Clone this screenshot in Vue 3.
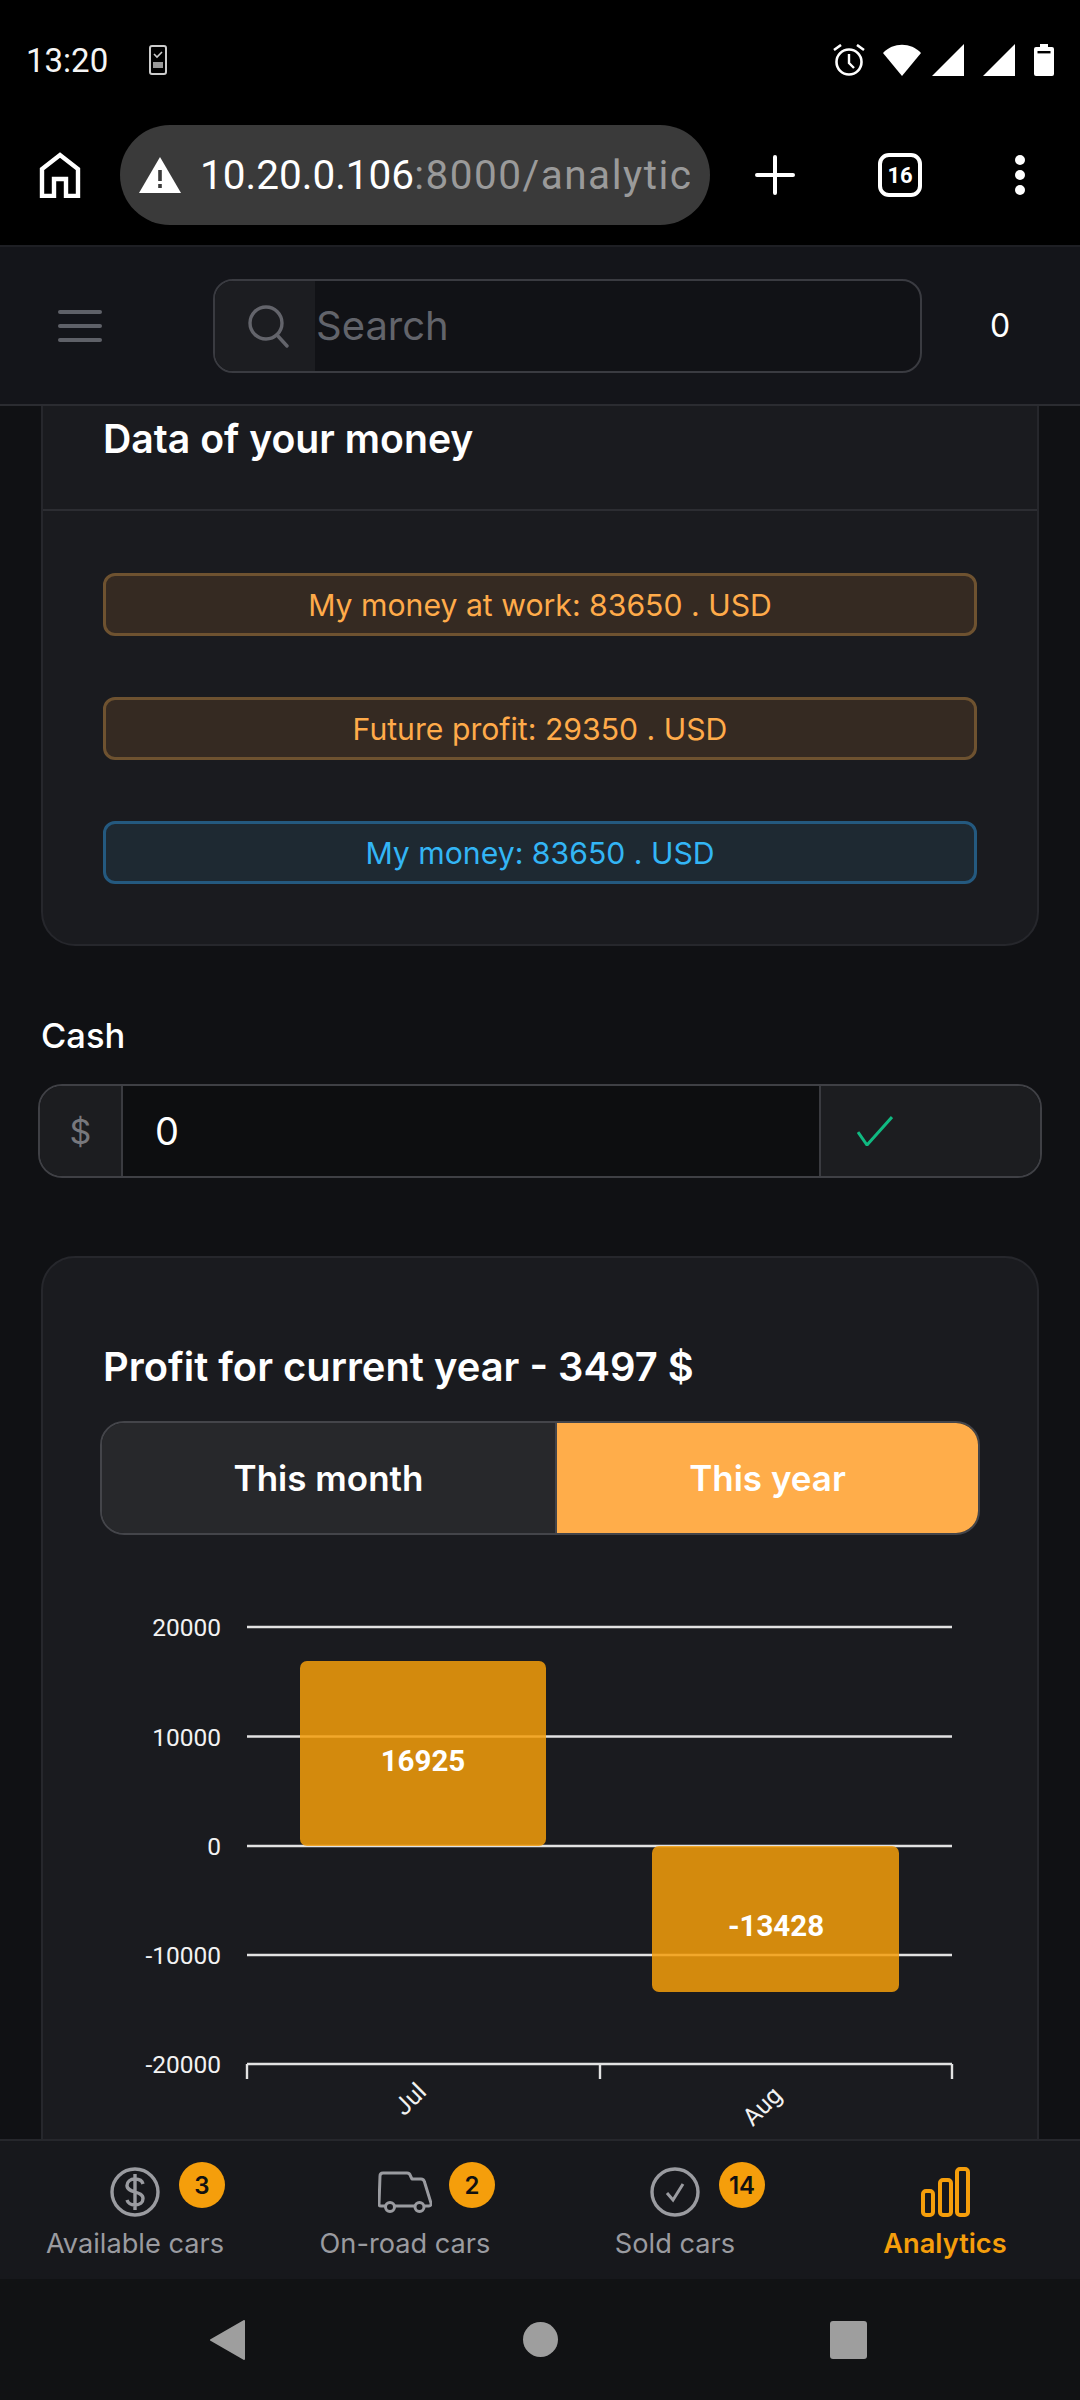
<template>
  <div class="screen">
    <div class="status-bar">
      <div class="status-left">
        <span class="time">13:20</span>
        <svg class="phone-icon" viewBox="0 0 18 30" width="18" height="30">
          <rect x="1" y="1" width="16" height="28" rx="2" fill="none" stroke="#ccc" stroke-width="2" />
          <path d="M5 9l3 3 5-5" fill="none" stroke="#ccc" stroke-width="1.6" />
          <rect x="4" y="17" width="10" height="6" fill="#999" />
        </svg>
      </div>
      <div class="status-right">
        <svg viewBox="0 0 32 32" width="32" height="32">
          <circle cx="16" cy="18" r="12.5" fill="none" stroke="#fff" stroke-width="2.6" />
          <path d="M16 10v9l5 5" fill="none" stroke="#fff" stroke-width="2.4" />
          <path d="M1 6l7-5M31 6l-7-5" stroke="#fff" stroke-width="2.6" />
        </svg>
        <svg class="wifi" viewBox="0 0 38 32" width="38" height="32">
          <path d="M0 9C10-2 28-2 38 9L19 32z" fill="#fff" />
        </svg>
        <svg class="signal" viewBox="0 0 32 32" width="32" height="32">
          <path d="M32 0v32H0z" fill="#fff" />
        </svg>
        <svg class="signal" viewBox="0 0 32 32" width="32" height="32">
          <path d="M32 0v32H0z" fill="#fff" />
        </svg>
        <svg class="battery" viewBox="0 0 20 32" width="20" height="32">
          <path d="M6 0h8v3h4a2 2 0 0 1 2 2v25a2 2 0 0 1-2 2H2a2 2 0 0 1-2-2V5a2 2 0 0 1 2-2h4z" fill="#fff" />
          <rect x="3.5" y="7" width="13" height="2.4" fill="#000" />
        </svg>
      </div>
    </div>

    <div class="toolbar">
      <svg class="home-icon" viewBox="0 0 42 46" width="42" height="46">
        <path d="M3 44V17L21 3l18 14v27H27V27H15v17z" fill="none" stroke="#fff" stroke-width="4.4" />
      </svg>
      <div class="url-pill">
        <svg viewBox="0 0 42 36" width="42" height="36">
          <path d="M21 0l21 36H0z" fill="#fff" />
          <rect x="19.2" y="13" width="3.6" height="11" fill="#3a3a3a" />
          <rect x="19.2" y="27" width="3.6" height="4" fill="#3a3a3a" />
        </svg>
        <div class="url-text"><span class="url-host">10.20.0.106</span><span class="url-path">:8000/analytics</span></div>
      </div>
      <svg class="plus-icon" viewBox="0 0 40 40" width="40" height="40">
        <path d="M20 2v36M2 20h36" stroke="#fff" stroke-width="4" stroke-linecap="round" />
      </svg>
      <div class="tab-count">16</div>
      <div class="dots"><i></i><i></i><i></i></div>
    </div>

    <header class="app-header">
      <div class="burger"><i></i><i></i><i></i></div>
      <div class="search-box">
        <span class="search-prefix">
          <svg viewBox="0 0 42 44" width="42" height="44">
            <circle cx="19" cy="19" r="16" fill="none" stroke="#63646b" stroke-width="3.4" />
            <path d="M30 31l10 11" stroke="#63646b" stroke-width="3.4" stroke-linecap="round" />
          </svg>
        </span>
        <input class="search-input" placeholder="Search" />
      </div>
      <span class="header-count">0</span>
    </header>

    <main class="content">
      <section class="card money-card">
        <div class="card-header">
          <h2>Data of your money</h2>
        </div>
        <div class="card-body">
          <div
            v-for="alert in alerts"
            :key="alert.text"
            class="alert"
            :class="alert.kind"
          >
            {{ alert.text }}
          </div>
        </div>
      </section>

      <label class="cash-label">Cash</label>
      <div class="cash-group">
        <span class="cash-prefix">$</span>
        <input class="cash-input" value="0" />
        <button class="cash-save">
          <svg viewBox="0 0 36 30" width="36" height="30">
            <path d="M1 16l9 13L35 1" fill="none" stroke="#10b981" stroke-width="3" />
          </svg>
        </button>
      </div>

      <section class="card profit-card">
        <h2>Profit for current year - 3497 $</h2>
        <div class="toggle">
          <button class="toggle-btn">This month</button>
          <button class="toggle-btn active">This year</button>
        </div>

        <svg class="chart" viewBox="43 1590 994 560" width="994" height="560">
          <line
            v-for="tick in ticks"
            :key="tick.label"
            x1="247"
            x2="952"
            :y1="tick.y"
            :y2="tick.y"
            class="grid-line"
          />
          <text
            v-for="tick in ticks"
            :key="'l' + tick.label"
            x="221"
            :y="tick.y + 9"
            text-anchor="end"
            class="axis-label"
          >
            {{ tick.label }}
          </text>
          <path d="M247 2079v-15M600 2079v-15M952 2079v-15" class="grid-line" />

          <rect x="300" y="1661" width="246" height="185" rx="7" class="bar" />
          <rect x="652" y="1846" width="247" height="146" rx="7" class="bar" />
          <text x="423" y="1771" text-anchor="middle" class="bar-label">16925</text>
          <text x="776" y="1936" text-anchor="middle" class="bar-label">-13428</text>

          <text x="0" y="0" text-anchor="middle" class="axis-label" transform="translate(416 2105) rotate(-45)">Jul</text>
          <text x="0" y="0" text-anchor="middle" class="axis-label" transform="translate(768 2112) rotate(-45)">Aug</text>
        </svg>
      </section>
    </main>

    <nav class="bottom-nav">
      <div
        v-for="item in navItems"
        :key="item.label"
        class="nav-item"
        :class="{ active: item.active }"
      >
        <div class="nav-icon">
          <svg v-if="item.icon === 'dollar'" viewBox="0 0 50 50" width="50" height="50">
            <circle cx="25" cy="25" r="23" fill="none" stroke="#9a9ba0" stroke-width="3.4" />
            <path d="M33 17c-1-4-4-5-8-5-5 0-8 3-8 6.5 0 8 16 5 16 13 0 4-3 6.5-8 6.5-4 0-7-2-8-5M25 7v36" fill="none" stroke="#9a9ba0" stroke-width="3.4" />
          </svg>
          <svg v-if="item.icon === 'truck'" viewBox="0 0 54 42" width="54" height="42">
            <path d="M7 35H3c-1.5 0-2-1-2-2L2 5c0-2 1-3 3-3h24c2 0 3 1 3.500 3L34 8h9c2 0 3 1 3.500 3L53 32c.3 2-.5 3-2 3h-4M17 35h20" fill="none" stroke="#9a9ba0" stroke-width="3" stroke-linejoin="round" />
            <circle cx="12" cy="36" r="4.5" fill="none" stroke="#9a9ba0" stroke-width="3" />
            <circle cx="41.5" cy="36" r="4.5" fill="none" stroke="#9a9ba0" stroke-width="3" />
          </svg>
          <svg v-if="item.icon === 'check'" viewBox="0 0 50 50" width="50" height="50">
            <circle cx="25" cy="25" r="23" fill="none" stroke="#9a9ba0" stroke-width="3.4" />
            <path d="M17 26l6 7 10-16" fill="none" stroke="#9a9ba0" stroke-width="3" />
          </svg>
          <svg v-if="item.icon === 'bars'" viewBox="0 0 50 50" width="50" height="50">
            <rect x="3" y="24" width="10" height="24" rx="3" fill="none" stroke="#f59e0b" stroke-width="4" />
            <rect x="20" y="13" width="11" height="35" rx="3" fill="none" stroke="#f59e0b" stroke-width="4" />
            <rect x="37" y="2" width="11" height="46" rx="3" fill="none" stroke="#f59e0b" stroke-width="4" />
          </svg>
          <span v-if="item.badge" class="badge">{{ item.badge }}</span>
        </div>
        <span class="nav-label">{{ item.label }}</span>
      </div>
    </nav>

    <div class="system-nav">
      <svg viewBox="0 0 36 40" width="36" height="40">
        <path d="M35 1v38L2 20z" fill="#9e9e9e" stroke="#9e9e9e" stroke-linejoin="round" stroke-width="2" />
      </svg>
      <span class="sys-circle"></span>
      <span class="sys-square"></span>
    </div>
  </div>
</template>

<script setup>
const alerts = [
  { text: "My money at work: 83650 . USD", kind: "warning" },
  { text: "Future profit: 29350 . USD", kind: "warning" },
  { text: "My money: 83650 . USD", kind: "info" },
];

const ticks = [
  { label: "20000", y: 1627 },
  { label: "10000", y: 1736.5 },
  { label: "0", y: 1846 },
  { label: "-10000", y: 1955 },
  { label: "-20000", y: 2064 },
];

const navItems = [
  { label: "Available cars", icon: "dollar", badge: 3 },
  { label: "On-road cars", icon: "truck", badge: 2 },
  { label: "Sold cars", icon: "check", badge: 14 },
  { label: "Analytics", icon: "bars", active: true },
];
</script>

<style>
html,
body {
  background: #101114;
}
</style>

<style scoped>
.screen {
  width: 1080px;
  height: 2400px;
  display: flex;
  flex-direction: column;
  overflow: hidden;
  background: #101114;
  color: #fff;
  font-family: Inter, "Liberation Sans", sans-serif;
}

/* android + browser chrome */
.status-bar {
  height: 120px;
  flex: none;
  background: #000;
  display: flex;
  align-items: center;
  justify-content: space-between;
  padding: 0 26px;
  box-sizing: border-box;
}

.status-left {
  display: flex;
  align-items: center;
  gap: 41px;
}

.time {
  font-family: Roboto, sans-serif;
  font-size: 33px;
  color: #f5f5f5;
}

.status-right {
  display: flex;
  align-items: center;
  gap: 18px;
}

.status-right svg {
  display: block;
}

.wifi {
  margin-right: -7px;
}

.signal + .signal {
  margin-left: 1px;
}

.battery {
  margin-left: 1px;
}

.toolbar {
  height: 125px;
  flex: none;
  background: #000;
  display: flex;
  align-items: center;
  padding: 5px 0 20px 39px;
  box-sizing: border-box;
}

.url-pill {
  width: 590px;
  height: 100px;
  margin-left: 39px;
  border-radius: 50px;
  background: #3a3a3a;
  display: flex;
  align-items: center;
  padding-left: 19px;
  box-sizing: border-box;
  flex: none;
}

.url-text {
  width: 490px;
  margin-left: 19px;
  overflow: hidden;
  white-space: nowrap;
  font-family: Roboto, sans-serif;
  font-size: 40.5px;
}

.url-host {
  color: #fff;
}

.url-path {
  color: #9a9a9a;
  letter-spacing: 1.5px;
}

.plus-icon {
  margin-left: 45px;
  flex: none;
}

.tab-count {
  width: 44px;
  height: 44px;
  margin-left: 83px;
  border: 4px solid #fff;
  border-radius: 11px;
  box-sizing: border-box;
  flex: none;
  display: flex;
  align-items: center;
  justify-content: center;
  font-family: Roboto, sans-serif;
  font-size: 22px;
  font-weight: 700;
}

.dots {
  margin-left: 93px;
  display: flex;
  flex-direction: column;
  gap: 5px;
}

.dots i {
  width: 10px;
  height: 10px;
  border-radius: 50%;
  background: #fff;
}

/* app header */
.app-header {
  height: 161px;
  flex: none;
  background: #14151a;
  border-top: 2px solid #1e1f24;
  border-bottom: 2px solid #2b2c31;
  display: flex;
  align-items: center;
  padding-left: 58px;
  box-sizing: border-box;
}

.burger {
  width: 44px;
  display: flex;
  flex-direction: column;
  gap: 10px;
}

.burger i {
  height: 4px;
  border-radius: 2px;
  background: #5f6168;
}

.search-box {
  width: 709px;
  height: 94px;
  margin-left: 111px;
  display: flex;
  border: 2px solid #3a3b41;
  border-radius: 20px;
  overflow: hidden;
  box-sizing: border-box;
  background: #111216;
}

.search-prefix {
  width: 100px;
  flex: none;
  background: #1c1d21;
  display: flex;
  align-items: center;
  justify-content: center;
  padding-left: 5px;
  box-sizing: border-box;
}

.search-input {
  flex: 1;
  min-width: 0;
  border: none;
  outline: none;
  background: transparent;
  padding: 0 0 0 1px;
  font-family: inherit;
  font-size: 40px;
  color: #fff;
}

.search-input::placeholder {
  color: #62646b;
  opacity: 1;
}

.header-count {
  margin-left: 68px;
  font-size: 32px;
}

/* page */
.content {
  height: 1733px;
  flex: none;
  overflow: hidden;
  padding: 0 41px;
}

.card {
  background: #1a1b1f;
  border: 2px solid #26272c;
  border-radius: 34px;
  box-sizing: border-box;
}

.card h2 {
  margin: 0;
  font-size: 39.2px;
  font-weight: 600;
  line-height: 46px;
}

.profit-card h2 {
  font-size: 39.9px;
}

.money-card {
  margin-top: -64px;
}

.card-header {
  padding: 72px 60px 47px;
  border-bottom: 2px solid #2c2d32;
}

.card-body {
  padding: 62px 60px 60px;
  display: flex;
  flex-direction: column;
  gap: 61px;
}

.alert {
  height: 63px;
  border-radius: 12px;
  border: 3px solid;
  box-sizing: border-box;
  display: flex;
  align-items: center;
  justify-content: center;
  font-size: 30.2px;
}

.alert.warning {
  background: #352a22;
  border-color: #6e5230;
  color: #ffab4a;
}

.alert.info {
  background: #1e2932;
  border-color: #24597f;
  color: #33b5f5;
}

.cash-label {
  display: block;
  margin-top: 70px;
  font-size: 34.5px;
  font-weight: 500;
  line-height: 40px;
}

.cash-group {
  height: 94px;
  margin: 28px -3px 0;
  display: flex;
  border: 2px solid #3f4045;
  border-radius: 24px;
  overflow: hidden;
  box-sizing: border-box;
}

.cash-prefix {
  width: 83px;
  flex: none;
  background: #1c1d20;
  border-right: 2px solid #3a3b40;
  box-sizing: border-box;
  display: flex;
  align-items: center;
  justify-content: center;
  font-size: 34px;
  color: #77787d;
}

.cash-input {
  flex: 1;
  min-width: 0;
  border: none;
  outline: none;
  background: #0d0e10;
  padding: 0 0 0 32px;
  font-family: inherit;
  font-size: 38px;
  color: #fff;
}

.cash-save {
  width: 221px;
  flex: none;
  background: #1c1d20;
  border: none;
  border-left: 2px solid #3a3b40;
  box-sizing: border-box;
  padding: 0 0 0 36px;
  text-align: left;
}

.cash-save svg {
  display: block;
}

.profit-card {
  margin-top: 78px;
  padding: 86px 60px 0;
  height: 1100px;
}

.toggle {
  height: 114px;
  margin: 31px -3px 0;
  display: flex;
  border: 2px solid #44454a;
  border-radius: 24px;
  overflow: hidden;
  box-sizing: border-box;
}

.toggle-btn {
  border: none;
  background: #27282b;
  color: #fff;
  font-family: inherit;
  font-size: 35px;
  font-weight: 600;
  width: 453px;
  flex: none;
}

.toggle-btn.active {
  flex: 1;
  background: #ffad4a;
  border-left: 2px solid #44454a;
}

.chart {
  display: block;
  margin: 55px -60px 0;
}

.grid-line {
  stroke: #e2e2e2;
  stroke-width: 2.4;
  fill: none;
}

.axis-label {
  font-family: Roboto, sans-serif;
  font-size: 24.5px;
  fill: #f2f2f2;
}

.bar {
  fill: #f59e0b;
  fill-opacity: 0.85;
}

.bar-label {
  font-family: Roboto, sans-serif;
  font-size: 29.5px;
  font-weight: 700;
  fill: #fff;
}

/* bottom nav */
.bottom-nav {
  height: 140px;
  flex: none;
  background: #17181c;
  border-top: 2px solid #26272c;
  box-sizing: border-box;
  display: grid;
  grid-template-columns: repeat(4, 1fr);
}

.nav-item {
  display: flex;
  flex-direction: column;
  align-items: center;
  padding-top: 26px;
  color: #9a9ba0;
}

.nav-item.active {
  color: #f59e0b;
  font-weight: 600;
}

.nav-icon {
  position: relative;
  width: 50px;
  height: 50px;
  display: flex;
  align-items: center;
  justify-content: center;
}

.nav-icon svg {
  display: block;
  flex: none;
}

.badge {
  position: absolute;
  left: 69px;
  top: -5px;
  min-width: 46px;
  height: 46px;
  padding: 0 1px;
  box-sizing: border-box;
  border-radius: 23px;
  background: #f59e0b;
  color: #111;
  font-size: 24px;
  font-weight: 600;
  display: flex;
  align-items: center;
  justify-content: center;
}

.nav-label {
  margin-top: 9px;
  font-size: 27.2px;
  line-height: 36px;
  white-space: nowrap;
}

.system-nav {
  height: 121px;
  flex: none;
  background: #111214;
  display: flex;
  align-items: center;
  padding-left: 209px;
  box-sizing: border-box;
}

.system-nav svg {
  flex: none;
}

.sys-circle {
  width: 35px;
  height: 35px;
  margin-left: 278px;
  border-radius: 50%;
  background: #9e9e9e;
}

.sys-square {
  width: 37px;
  height: 38px;
  margin-left: 272px;
  border-radius: 3px;
  background: #9e9e9e;
}
</style>
